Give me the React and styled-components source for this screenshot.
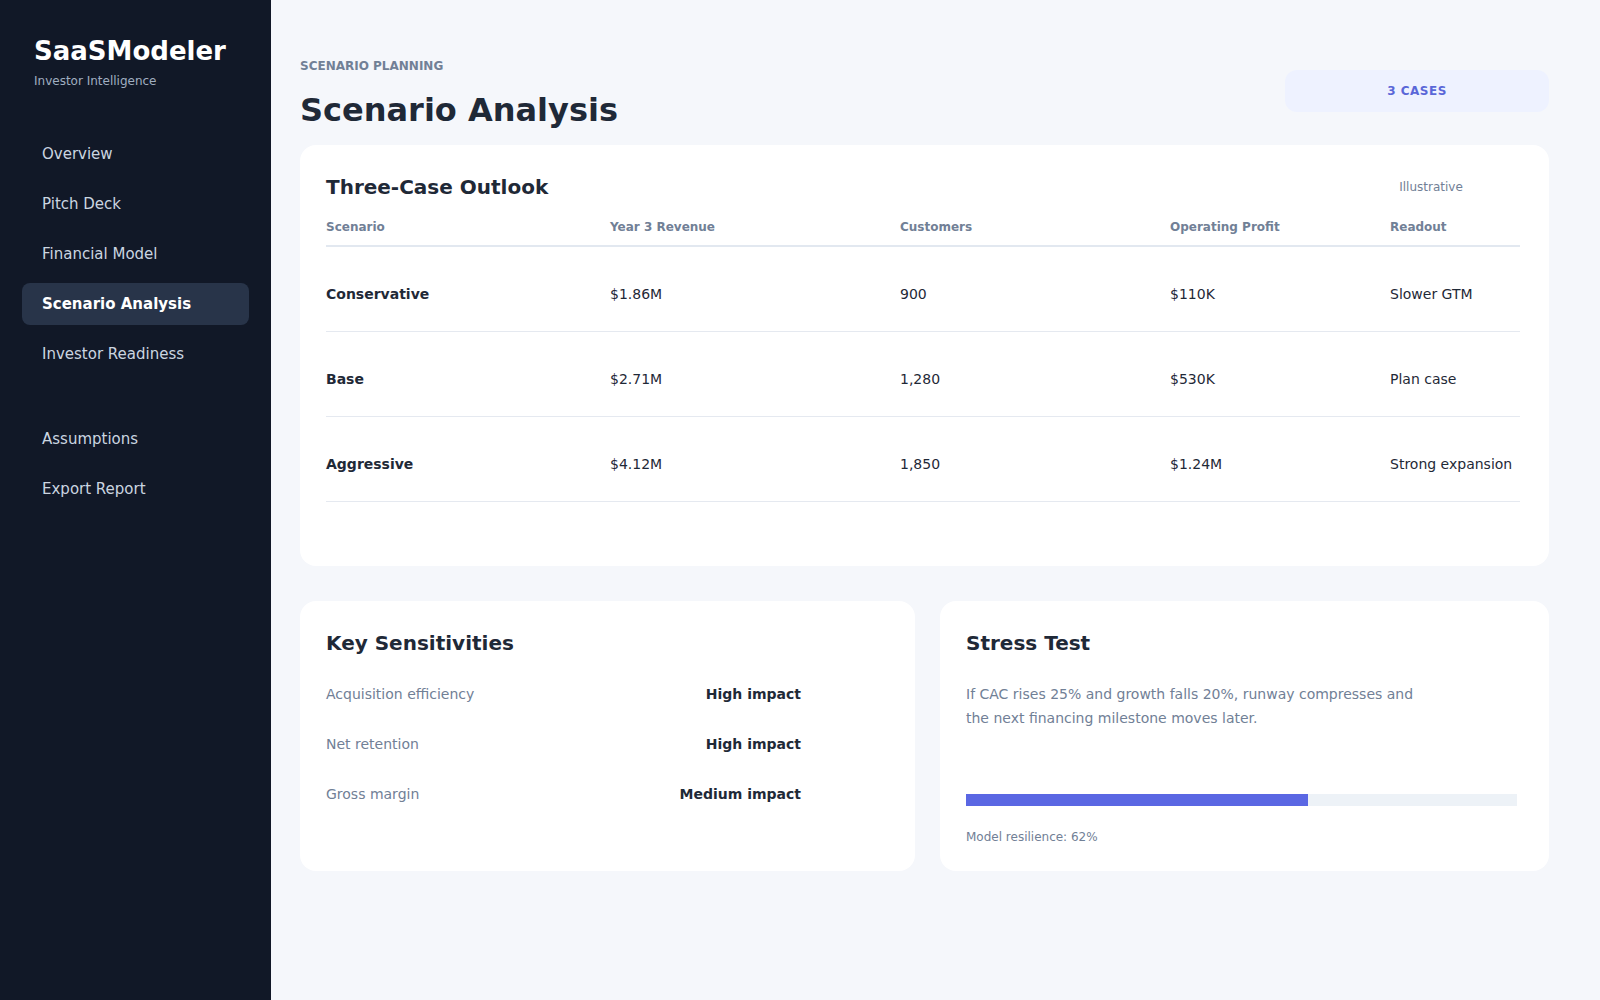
import React from 'react'
import styled, { createGlobalStyle } from 'styled-components'

const GlobalStyle = createGlobalStyle`
  * { box-sizing: border-box; }
  html, body { margin: 0; padding: 0; }
  body {
    font-family: "DejaVu Sans", "Liberation Sans", sans-serif;
    background: #f5f7fb;
    color: #1f2937;
  }
`

const NAV_TOP = ['Overview', 'Pitch Deck', 'Financial Model', 'Scenario Analysis', 'Investor Readiness']
const NAV_BOTTOM = ['Assumptions', 'Export Report']

const CASES = [
  { name: 'Conservative', revenue: '$1.86M', customers: '900', profit: '$110K', readout: 'Slower GTM' },
  { name: 'Base', revenue: '$2.71M', customers: '1,280', profit: '$530K', readout: 'Plan case' },
  { name: 'Aggressive', revenue: '$4.12M', customers: '1,850', profit: '$1.24M', readout: 'Strong expansion' },
]

const SENSITIVITIES = [
  { label: 'Acquisition efficiency', impact: 'High impact' },
  { label: 'Net retention', impact: 'High impact' },
  { label: 'Gross margin', impact: 'Medium impact' },
]

const RESILIENCE = 62

export default function App() {
  return (
    <>
      <GlobalStyle />
      <Layout>
        <Sidebar>
          <Brand>
            <BrandName>SaaSModeler</BrandName>
            <BrandTag>Investor Intelligence</BrandTag>
          </Brand>
          <Nav>
            {NAV_TOP.map((item) => (
              <NavItem key={item} $active={item === 'Scenario Analysis'}>{item}</NavItem>
            ))}
          </Nav>
          <Nav $secondary>
            {NAV_BOTTOM.map((item) => (
              <NavItem key={item}>{item}</NavItem>
            ))}
          </Nav>
        </Sidebar>

        <Main>
          <Content>
            <Header>
              <div>
                <Eyebrow>SCENARIO PLANNING</Eyebrow>
                <PageTitle>Scenario Analysis</PageTitle>
              </div>
              <Pill>3 CASES</Pill>
            </Header>

            <Card $table>
              <CardHead>
                <CardTitle>Three-Case Outlook</CardTitle>
                <Note>Illustrative</Note>
              </CardHead>
              <Table>
                <HeadRow>
                  <HeadCell>Scenario</HeadCell>
                  <HeadCell>Year 3 Revenue</HeadCell>
                  <HeadCell>Customers</HeadCell>
                  <HeadCell>Operating Profit</HeadCell>
                  <HeadCell>Readout</HeadCell>
                </HeadRow>
                {CASES.map((c) => (
                  <Row key={c.name}>
                    <Cell $bold>{c.name}</Cell>
                    <Cell>{c.revenue}</Cell>
                    <Cell>{c.customers}</Cell>
                    <Cell>{c.profit}</Cell>
                    <Cell>{c.readout}</Cell>
                  </Row>
                ))}
              </Table>
            </Card>

            <Split>
              <Card>
                <CardTitle>Key Sensitivities</CardTitle>
                <SensList>
                  {SENSITIVITIES.map((s) => (
                    <SensRow key={s.label}>
                      <SensLabel>{s.label}</SensLabel>
                      <SensValue>{s.impact}</SensValue>
                    </SensRow>
                  ))}
                </SensList>
              </Card>

              <Card>
                <CardTitle>Stress Test</CardTitle>
                <Para>
                  If CAC rises 25% and growth falls 20%, runway compresses and the next financing milestone moves later.
                </Para>
                <Track>
                  <Fill style={{ width: `${RESILIENCE}%` }} />
                </Track>
                <Caption>Model resilience: {RESILIENCE}%</Caption>
              </Card>
            </Split>
          </Content>
        </Main>
      </Layout>
    </>
  )
}

/////////////////////////////////////////////////////////////////
// STYLED-COMPONENTS
/////////////////////////////////////////////////////////////////

const Layout = styled.div`
  display: flex;
  min-height: 1000px;
`

const Sidebar = styled.aside`
  width: 271px;
  flex-shrink: 0;
  background: #111827;
  padding: 35px 22px;
`

const Brand = styled.div`
  padding-left: 12px;
  margin-bottom: 44px;
`

const BrandName = styled.div`
  font-size: 26px;
  font-weight: 700;
  line-height: 32px;
  color: #ffffff;
`

const BrandTag = styled.div`
  margin-top: 6px;
  font-size: 12px;
  line-height: 16px;
  color: #a0aec0;
`

const Nav = styled.nav`
  display: flex;
  flex-direction: column;
  gap: 8px;
  margin-top: ${(p) => (p.$secondary ? '43px' : '0')};
`

const NavItem = styled.div`
  height: 42px;
  display: flex;
  align-items: center;
  padding-left: 20px;
  border-radius: 8px;
  font-size: 15px;
  font-weight: ${(p) => (p.$active ? 700 : 400)};
  color: ${(p) => (p.$active ? '#ffffff' : '#cbd5e0')};
  background: ${(p) => (p.$active ? '#283449' : 'transparent')};
`

const Main = styled.main`
  flex: 1;
  padding: 57px 29px 40px;
`

const Content = styled.div`
  max-width: 1249px;
`

const Header = styled.header`
  display: flex;
  justify-content: space-between;
  align-items: center;
  margin-bottom: 15px;
`

const Eyebrow = styled.div`
  font-size: 12px;
  line-height: 18px;
  font-weight: 700;
  color: #718096;
`

const PageTitle = styled.h1`
  margin: 15px 0 0;
  font-size: 32px;
  line-height: 40px;
  font-weight: 700;
  color: #1f2937;
`

const Pill = styled.div`
  width: 264px;
  height: 42px;
  display: flex;
  align-items: center;
  justify-content: center;
  background: #eef2ff;
  border-radius: 12px;
  font-size: 12px;
  font-weight: 700;
  letter-spacing: 0.5px;
  color: #5a67d8;
  margin-top: -5px;
`

const Card = styled.section`
  background: #ffffff;
  border-radius: 16px;
  padding: ${(p) => (p.$table ? '26px 29px 64px 26px' : '26px')};
  min-height: ${(p) => (p.$table ? '0' : '270px')};
  display: flex;
  flex-direction: column;
`

const CardHead = styled.div`
  display: flex;
  justify-content: space-between;
  align-items: center;
  margin-bottom: 16px;
`

const CardTitle = styled.h2`
  margin: 0;
  font-size: 20px;
  line-height: 32px;
  font-weight: 700;
  color: #1f2937;
`

const Note = styled.span`
  width: 178px;
  text-align: center;
  font-size: 12px;
  color: #718096;
`

const Table = styled.div`
  display: flex;
  flex-direction: column;
`

const HeadRow = styled.div`
  display: grid;
  grid-template-columns: 284px 290px 270px 220px 1fr;
  padding-bottom: 10px;
  border-bottom: 2px solid #e2e8f0;
`

const HeadCell = styled.div`
  font-size: 12px;
  line-height: 16px;
  font-weight: 700;
  color: #718096;
`

const Row = styled.div`
  display: grid;
  grid-template-columns: 284px 290px 270px 220px 1fr;
  align-items: center;
  padding: 37px 0 27px;
  border-bottom: 1px solid #e5e9f0;
`

const Cell = styled.div`
  font-size: 14px;
  line-height: 20px;
  font-weight: ${(p) => (p.$bold ? 700 : 400)};
  color: #1f2937;
`

const Split = styled.div`
  display: grid;
  grid-template-columns: 615px 1fr;
  gap: 25px;
  margin-top: 35px;
`

const SensList = styled.div`
  margin-top: 10px;
  max-width: 475px;
`

const SensRow = styled.div`
  display: flex;
  justify-content: space-between;
  align-items: center;
  height: 50px;
  font-size: 14px;
`

const SensLabel = styled.span`
  color: #718096;
`

const SensValue = styled.span`
  font-weight: 700;
  color: #1f2937;
`

const Para = styled.p`
  margin: 23px 0 0;
  max-width: 460px;
  font-size: 14px;
  line-height: 24px;
  color: #718096;
`

const Track = styled.div`
  margin-top: auto;
  height: 12px;
  width: 551px;
  background: #edf2f7;
`

const Fill = styled.div`
  height: 100%;
  background: #5a67e3;
`

const Caption = styled.div`
  margin-top: 23px;
  font-size: 12px;
  line-height: 16px;
  color: #718096;
`
